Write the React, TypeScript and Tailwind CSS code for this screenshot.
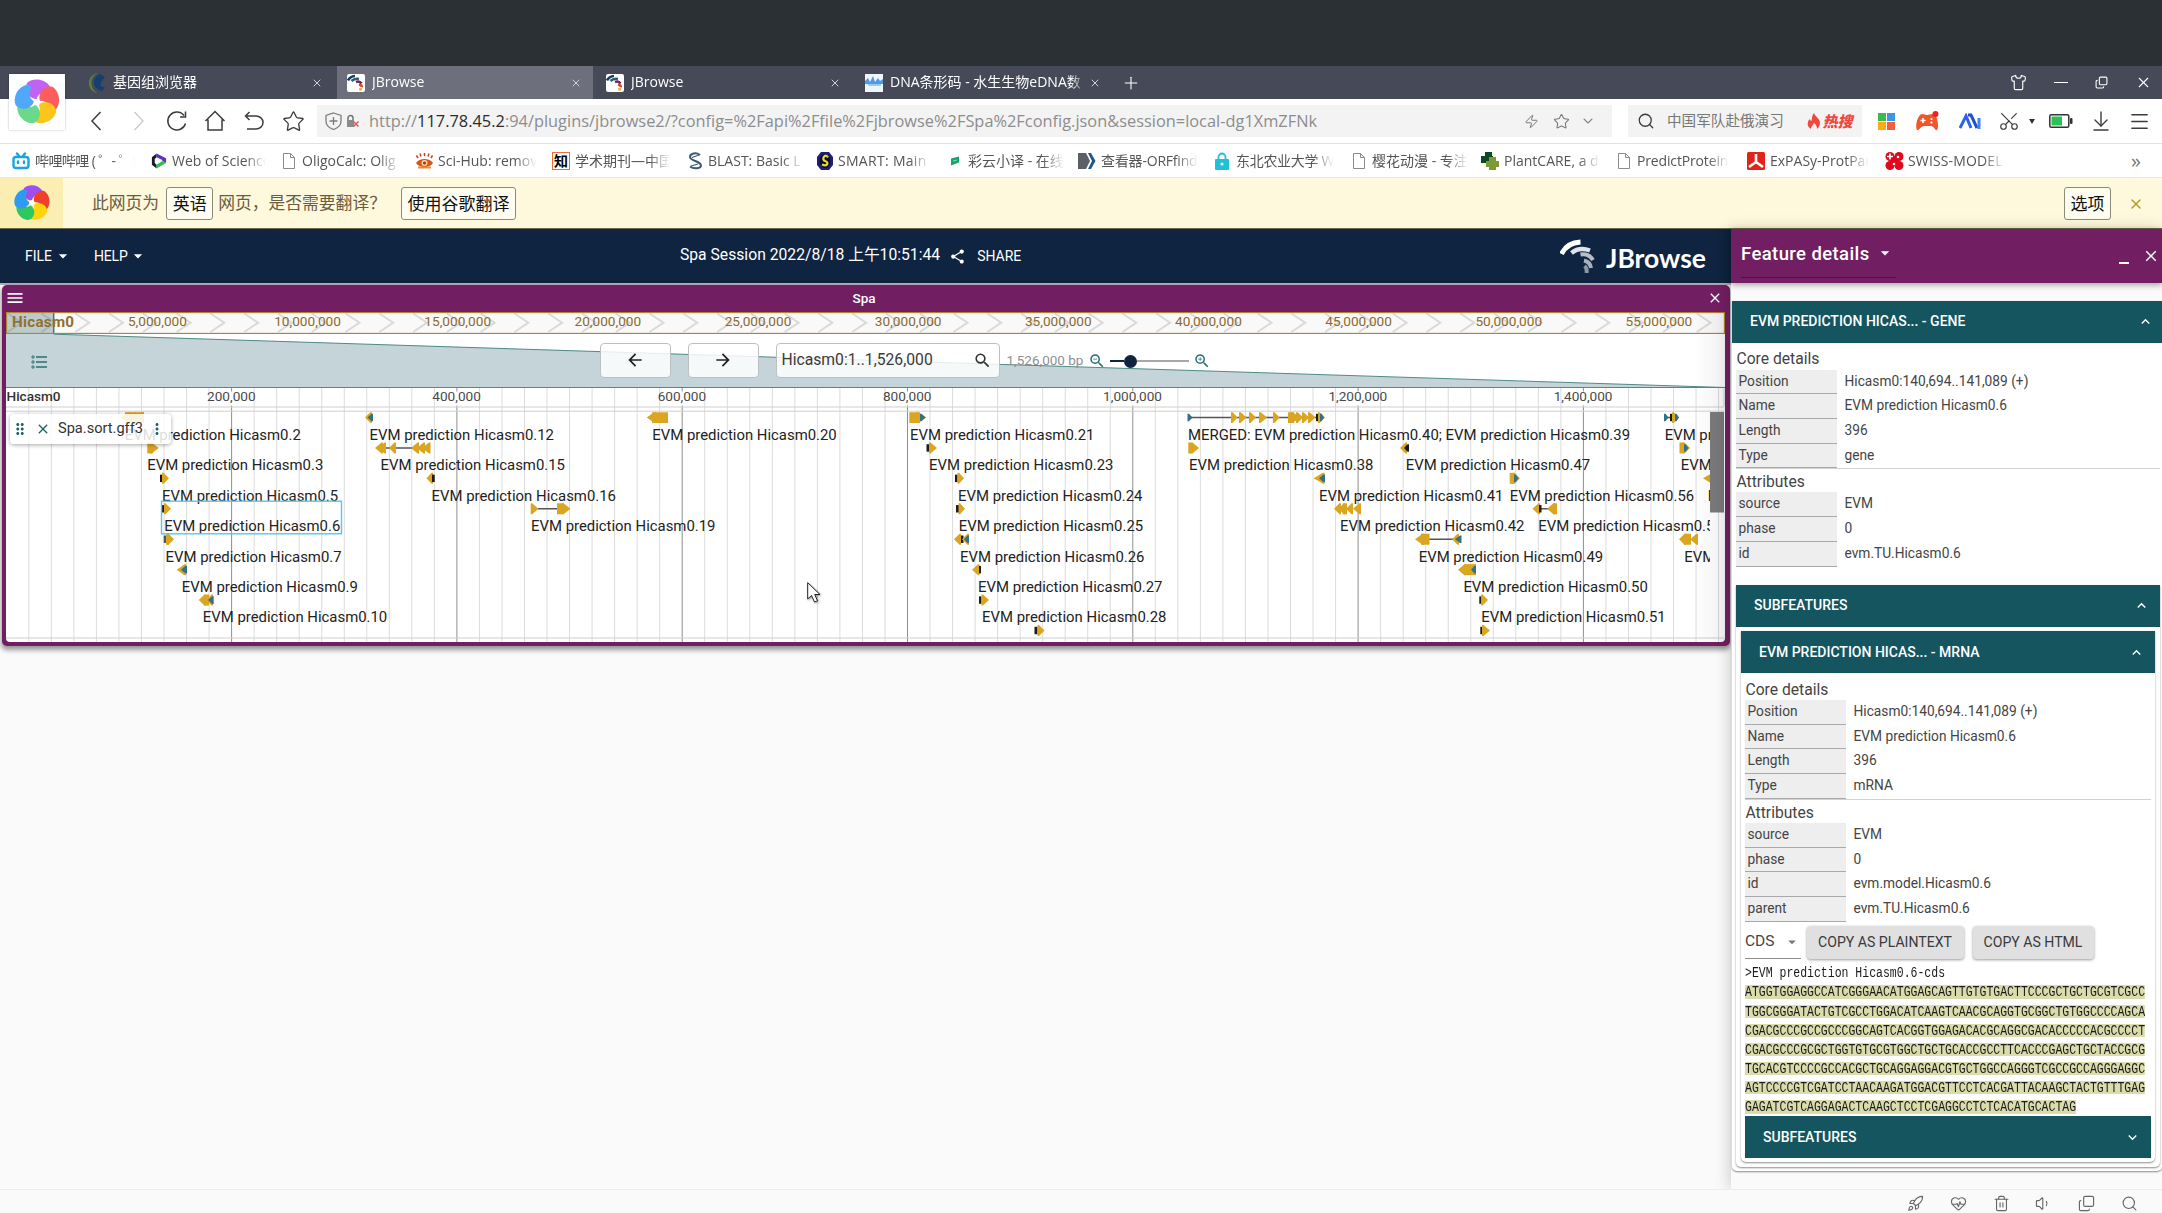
import React from 'react';
import {
  HeartPulse, Trash2, Volume1, Search, Shirt, Zap, Star, ChevronDown, Scissors, Menu, Rocket, Plus, ArrowDownToLine, X, Copy,
} from 'lucide-react';
import {
  MdShare, MdClose, MdSearch, MdZoomIn, MdZoomOut, MdDragIndicator, MdMoreVert, MdArrowBack, MdArrowForward, MdMenu, MdExpandLess, MdExpandMore, MdArrowDropDown,
} from 'react-icons/md';

const UI = "font-['Open_Sans','Noto_Sans_CJK_SC',sans-serif]";
const APP = "font-['Roboto','Noto_Sans_CJK_SC',sans-serif]";

/* ---------- browser chrome icons ---------- */

function Pinwheel({ className, colors }: { className: string; colors: string[] }) {
  return (
    <svg viewBox="-25 -25 50 50" className={className}>
      {colors.map((c, i) => (
        <path key={i} fill={c} transform={`rotate(${i * 72 - 6})`} d="M0 -3C-9 -5 -13 -14 -8 -21C-1 -26 11 -23 15 -15C16 -12 15 -10 14 -8C11 -11 3 -11 0 -3Z" />
      ))}
      <circle r="3.500" fill="#fff" />
    </svg>
  );
}

function JBrowseFavicon() {
  return (
    <svg viewBox="0 0 18 18" className="h-[18px] w-[18px] shrink-0 rounded-[2px] bg-white">
      <g fill="none" strokeWidth="2.6">
        <path d="M1 6.5C2.5 3.5 5 2.2 8 2" stroke="#1d3b5c" />
        <path d="M4.5 7C7 4.6 9.5 4.5 12 5" stroke="#22636e" />
        <path d="M9 8C11.5 7 13.5 8 14.5 9.5" stroke="#721e63" />
        <path d="M12 10.500C14 11 15 12 14.800 13.200" stroke="#d8433c" />
        <path d="M13.500 14V16.500" stroke="#f2a527" />
      </g>
    </svg>
  );
}

const bookmarkIcons: Record<string, React.ReactNode> = {
  bili: (
    <svg viewBox="0 0 18 18" className="h-[18px] w-[18px]" fill="none" stroke="#1aa3dc" strokeWidth="2.400" strokeLinecap="round">
      <rect x="1.500" y="5" width="15" height="11" rx="2.500" />
      <path d="M5 1.500 7 4M13 1.500 11 4M6 9.500v1.500M12 9.500v1.500" />
    </svg>
  ),
  wos: (
    <svg viewBox="0 0 18 18" className="h-[18px] w-[17px]">
      <path d="M7 1 2 5v8l5 4v-4l-2-2V7l2-2z" fill="#1c1c28" />
      <path d="M7 1l10 5v5l-4-2V8L7 5z" fill="#5e33bf" />
      <path d="M7 17v-4l6-4 4 2z" fill="#2fc04f" />
    </svg>
  ),
  doc: (
    <svg viewBox="0 0 12 16" className="h-4 w-3" fill="#fff" stroke="#8b8b8b">
      <path d="M.5.5h7l4 4v11H.5zM7.500.5v4h4" />
    </svg>
  ),
  scihub: (
    <svg viewBox="0 0 19 18" className="h-[18px] w-[19px]">
      <path d="M1 11C4 5.500 15 5.500 18 11C15 16.500 4 16.500 1 11Z" fill="#d9541e" />
      <circle cx="9.500" cy="11" r="3" fill="#f7d9a0" /><circle cx="9.500" cy="11" r="1.600" fill="#c02a12" />
      <path d="M3 6 1.500 3.500M6 4.500 5 1.500M9.500 4V1M13 4.500l1-3M16 6l1.500-2.500" stroke="#d9341e" strokeWidth="1.500" />
      <path d="M3 15.500h13" stroke="#e88a2a" strokeWidth="2" />
    </svg>
  ),
  zhi: <span className="flex h-[18px] w-[18px] items-center justify-center border border-[#e8703a] bg-white text-[14px] leading-none font-bold text-black">知</span>,
  blast: (
    <svg viewBox="0 0 16 18" className="h-[18px] w-4" fill="none" stroke="#3f5878" strokeWidth="2">
      <path d="M13 3C9 0 3 1.500 3 5c0 4 11 4 11 8.500 0 3-7 4-11 1" /><path d="M5 5.500 12 3M4 14l7-2" strokeWidth="1.300" />
    </svg>
  ),
  smart: (
    <svg viewBox="0 0 18 18" className="h-[18px] w-[18px]">
      <path d="M5 0h8l4 5v8l-4 5H5l-4-5V5z" fill="#1d1f7c" />
      <ellipse cx="9" cy="9" rx="5.500" ry="7" fill="#0e0e28" />
      <path d="M12 5.500C9-.0 5 8 9 9s3 6-3 3.500" fill="none" stroke="#e8e022" strokeWidth="2.200" />
    </svg>
  ),
  caiyun: <svg viewBox="0 0 10 10" className="h-2.5 w-2.5"><path d="M1 2.500 9 .5v6L1 9.500z" fill="#15a46b" /><path d="M3 5l4-1" stroke="#7fe0b0" /></svg>,
  orf: <svg viewBox="0 0 18 16" className="h-4 w-[18px]"><path d="M0 0h8l4 8-4 8H0z" fill="#5b6066" /><path d="M10 0h3l4.500 8L13 16h-3l4-8z" fill="#205493" /></svg>,
  lock: (
    <svg viewBox="0 0 14 18" className="h-[18px] w-3.5">
      <path d="M3.500 8V5a3.500 3.500 0 0 1 7 0v3" fill="none" stroke="#20c0d8" strokeWidth="1.800" /><rect y="7" width="14" height="11" rx="1" fill="#20c0d8" /><circle cx="7" cy="12" r="1.500" fill="#fff" />
    </svg>
  ),
  plant: <svg viewBox="0 0 18 18" className="h-[18px] w-[18px]"><path d="M4 0h7v4h1v7H0V4h4z" fill="#0d4a22" /><path d="M8 5h7v4h3v6h-3v3H8v-3H5V9h3z" fill="#7d9a35" /></svg>,
  expasy: <svg viewBox="0 0 18 18" className="h-[18px] w-[18px]"><rect width="18" height="18" rx="1.500" fill="#e32219" /><path d="M9 2v8M9 10 2 15M9 10l7 5" stroke="#fff" strokeWidth="2.600" /></svg>,
  swiss: (
    <svg viewBox="0 0 19 18" className="h-[18px] w-[19px]" fill="#e0081c">
      <circle cx="5" cy="4.500" r="4.500" /><circle cx="14" cy="4.500" r="4.500" /><circle cx="5" cy="13.500" r="4.500" /><circle cx="14" cy="13.500" r="4.500" /><rect x="5" y="4" width="9" height="10" />
      <path d="M5 1.500v6M2 4.500h6" stroke="#fff" strokeWidth="1.600" /><circle cx="13" cy="5" r="1.300" fill="#fff" /><circle cx="9" cy="12" r="1.300" fill="#fff" />
    </svg>
  ),
};

const bookmarks: [string, string, string, string, string][] = [
  ['bili', '哔哩哔哩 ( ゜- ゜)', 'w-[138px]', 'w-[100px] tracking-[-.6px]', 'gap-[5px]'],
  ['wos', 'Web of Science', 'w-[133px]', 'w-[94px]', 'gap-[5px]'],
  ['doc', 'OligoCalc: Olig', 'w-[132px]', 'w-[98px]', 'gap-[7px]'],
  ['scihub', 'Sci-Hub: remov', 'w-[137px]', 'w-[99px]', 'gap-[4px]'],
  ['zhi', '学术期刊—中国', 'w-[135px]', 'w-[95px]', 'gap-[5px]'],
  ['blast', 'BLAST: Basic L', 'w-[129px]', 'w-[95px]', 'gap-[5px]'],
  ['smart', 'SMART: Main', 'w-[134px]', 'w-[92px] tracking-[.3px]', 'gap-[4px]'],
  ['caiyun', '彩云小译 - 在线', 'w-[128px]', 'w-[96px]', 'gap-[8px]'],
  ['orf', '查看器-ORFfind', 'w-[137px]', 'w-[97px] tracking-[-.2px]', 'gap-[5px]'],
  ['lock', '东北农业大学 W', 'w-[138px]', 'w-[98px] tracking-[-.3px]', 'gap-[7px]'],
  ['doc', '樱花动漫 - 专注', 'w-[128px]', 'w-[96px]', 'gap-[7px]'],
  ['plant', 'PlantCARE, a d', 'w-[137px]', 'w-[96px]', 'gap-[5px]'],
  ['doc', 'PredictProtein', 'w-[129px]', 'w-[92px] tracking-[-.15px]', 'gap-[7px]'],
  ['expasy', 'ExPASy-ProtPar', 'w-[138px]', 'w-[99px]', 'gap-[5px]'],
  ['swiss', 'SWISS-MODEL', 'w-[130px]', 'w-[97px] tracking-[.15px]', 'gap-[4px]'],
];

function Tab({ icon, label, width, active }: { icon: React.ReactNode; label: string; width: string; active?: boolean }) {
  return (
    <div className={`flex h-[33px] shrink-0 items-center pl-[10px] ${width} ${active ? 'bg-[#6d707c]' : ''}`}>
      {icon}
      <span className="-mt-[2px] ml-[7px] w-[196px] overflow-hidden text-[14px] whitespace-nowrap text-white [mask-image:linear-gradient(to_right,#000_92%,transparent)]">{label}</span>
      <X className="ml-auto h-3 w-3 shrink-0 text-[#d0d2d8]" strokeWidth={2} />
    </div>
  );
}

function TabStrip() {
  return (
    <div className="flex h-[33px] items-center bg-[#464a58] pl-[78px] text-white">
      <Tab width="w-[259px] pr-[14px]" label="基因组浏览器" icon={
        <svg viewBox="0 0 18 20" className="h-5 w-[18px] shrink-0"><path d="M10 0C2 3 1 15 9 20C-2 18-2 2 10 0Z" fill="#5b7f3a" /><path d="M12 1C3 5 4 16 14 18L17 14C12 14 10 12 17 4z" fill="#133f72" /></svg>} />
      <Tab width="w-[256px] pr-[11px]" label="JBrowse" active icon={<JBrowseFavicon />} />
      <div className="w-[3px]" />
      <Tab width="w-[256px] pr-[11px]" label="JBrowse" icon={<JBrowseFavicon />} />
      <div className="w-[3px]" />
      <Tab width="w-[257px] pr-[11px]" label="DNA条形码 - 水生生物eDNA数" icon={
        <svg viewBox="0 0 18 18" className="h-[18px] w-[18px] shrink-0"><rect width="18" height="18" fill="#eef6fd" /><path d="M0 7l3-3 2 4 3-6 2 6 3-4 2 3 3-2v5H0z" fill="#4f9be8" /><path d="M2 10h14v2H4z" fill="#9cc9f2" /></svg>} />
      <Plus className="ml-[9px] h-5 w-5" strokeWidth={1.3} />
      <div className="ml-auto flex items-center pr-2.5">
        <Shirt className="mr-[27px] h-[17px] w-[17px]" strokeWidth={1.6} />
        <div className="mr-[27px] h-px w-[14px] bg-white" />
        <Copy className="mr-[27px] h-[13px] w-[13px] -scale-x-100 rotate-180" strokeWidth={2} />
        <X className="h-[17px] w-[17px]" strokeWidth={1.5} />
      </div>
    </div>
  );
}

function AddressBar() {
  return (
    <div className="flex h-[45px] items-center border-b border-[#e2e2e2] bg-white pl-[86px] text-[#3c3c3c]">
      <svg viewBox="0 0 20 20" className="h-5 w-5" fill="none" stroke="currentColor" strokeWidth="1.500"><path d="M14.500 1 6 10l8.500 9" /></svg>
      <svg viewBox="0 0 20 20" className="ml-[23px] h-5 w-5" fill="none" stroke="#c9c9c9" strokeWidth="1.300"><path d="M5.500 1 14 10l-8.500 9" /></svg>
      <svg viewBox="0 0 20 20" className="ml-[18px] h-5 w-5 overflow-visible" fill="none" stroke="currentColor" strokeWidth="1.500"><path d="M18.500 12.500A9 9 0 1 1 17 4.500M18.500.5V6h-5.500" /></svg>
      <svg viewBox="0 0 20 20" className="ml-[18px] h-5 w-5 overflow-visible" fill="none" stroke="currentColor" strokeWidth="1.500"><path d="M.5 10 10 .5 19.500 10M3 8.500V19h14V8.500" /></svg>
      <svg viewBox="0 0 20 20" className="ml-[19px] h-5 w-5" fill="none" stroke="currentColor" strokeWidth="1.500"><path d="M1.500 5H12a7 6.500 0 0 1 0 13H3M5.500 1 1.500 5l4 4" /></svg>
      <Star className="ml-[18px] h-[23px] w-[23px]" strokeWidth={1.4} strokeLinejoin="miter" />
      <div className="ml-3 flex h-8 w-[1295px] items-center bg-[#f3f3f3] pr-4 pl-2">
        <svg viewBox="0 0 17 18" className="h-[18px] w-[17px]" fill="none" stroke="#7d7d7d" strokeWidth="1.300"><path d="M8.500 1 16 3.500V9c0 4-3 7-7.500 8.500C4 16 1 13 1 9V3.500zM8.500 5v8M4.500 9h8" /></svg>
        <svg viewBox="0 0 14 14" className="ml-1 h-3.5 w-3.5"><path d="M2 6V4a2.500 2.500 0 0 1 5 0v2" fill="none" stroke="#777" strokeWidth="1.500" /><rect x="1" y="6" width="7" height="7" fill="#8a8a8a" /><path d="m7.500 7.500 5 5m0-5-5 5" stroke="#e05050" strokeWidth="1.400" /></svg>
        <div className="ml-[9px] text-[16.35px] tracking-[.015px] whitespace-nowrap text-[#8d8d8d]">
          http://<span className="text-[#2b2b2b]">117.78.45.2</span>:94/plugins/jbrowse2/?config=%2Fapi%2Ffile%2Fjbrowse%2FSpa%2Fconfig.json&amp;session=local-dg1XmZFNk
        </div>
        <Zap className="ml-auto h-[15px] w-[15px] text-[#777]" strokeWidth={1.6} />
        <Star className="ml-[14px] h-[17px] w-[17px] text-[#777]" strokeWidth={1.5} />
        <ChevronDown className="ml-2.5 h-4 w-4 text-[#888]" strokeWidth={1.600} />
      </div>
      <div className="ml-4 flex h-8 w-[234px] items-center bg-[#f3f3f3] pl-[9px]">
        <Search className="h-[18px] w-[18px]" strokeWidth={1.700} />
        <span className="ml-3 text-[14.6px] whitespace-nowrap text-[#777]">中国军队赴俄演习</span>
        <svg viewBox="0 0 14 16" className="ml-[23px] h-4 w-3.5"><path d="M7 0c1 4 6 5 6 10 0 3-2 5-3 6 0-3-1-4-3-6-1 2-3 3-3 6C1 14 0 12 1 9c0-1 1-2 2-3 0 1 1 2 1.500 2C5 5 5 2 7 0z" fill="#f0483e" /></svg>
        <span className="ml-[3px] -skew-x-12 text-[15px] font-black text-[#f0483e]">热搜</span>
      </div>
      <div className="ml-4 grid grid-cols-2 gap-px">
        <i className="h-[8px] w-[8px] bg-[#3cba4e]" /><i className="h-[8px] w-[8px] bg-[#3b97e8]" /><i className="h-[8px] w-[8px] bg-[#fbab18]" /><i className="h-[8px] w-[8px] bg-[#f0603c]" />
      </div>
      <svg viewBox="0 0 23 20" className="ml-[21px] h-5 w-[23px]"><path d="M4 4c3-2 4 0 7 0s5-2 8 0c3 3 4 13 2 15-2 1-3-4-6-4H8c-3 0-5 5-7 4C-1 16 1 7 4 4Z" fill="#f0582c" /><path d="M7 7v5M4.500 9.500h5" stroke="#fff" strokeWidth="1.600" /><circle cx="15.500" cy="8" r="1.100" fill="#fff" /><circle cx="15.500" cy="11.500" r="1.100" fill="#fff" /><circle cx="19.500" cy="3" r="3" fill="#f02020" /></svg>
      <svg viewBox="0 0 22 16" className="ml-5 h-4 w-[22px]" fill="none" strokeWidth="3"><path d="M1 15 7 3l5 12" stroke="#2a62e8" /><path d="M9 2h3l6 13" stroke="#1f4fd0" /><path d="M20 5v11" stroke="#3b86f5" /></svg>
      <Scissors className="ml-[17px] h-[22px] w-[22px] -rotate-90" strokeWidth={1.300} />
      <i className="ml-[9px] h-0 w-0 border-x-[3px] border-t-[5px] border-x-transparent border-t-[#333]" />
      <svg viewBox="0 0 24 14" className="ml-[14px] h-3.5 w-6"><rect x=".8" y=".8" width="19" height="12.400" rx="1.500" fill="none" stroke="#333" strokeWidth="1.500" /><rect x="2.500" y="2.500" width="10.500" height="9" fill="#2bc255" /><rect x="21" y="4" width="2.500" height="6" rx="1" fill="#333" /></svg>
      <ArrowDownToLine className="ml-[16px] h-6 w-6" strokeWidth={1.400} />
      <Menu className="ml-[15px] h-[23px] w-[23px]" strokeWidth={1.500} />
    </div>
  );
}

function BookmarkBar() {
  return (
    <div className="flex h-[34px] items-center border-b border-[#e6e6e6] bg-white pl-[12px] text-[14px] text-[#555]">
      {bookmarks.map(([icon, label, w, tw, gap], i) => (
        <div key={i} className={`flex shrink-0 items-center ${w} ${gap}`}>
          <span className="shrink-0">{bookmarkIcons[icon]}</span>
          <span className={`overflow-hidden leading-[22px] whitespace-nowrap [mask-image:linear-gradient(to_right,#000_78%,transparent)] ${tw}`}>{label}</span>
        </div>
      ))}
      <span className="mr-[21px] ml-auto text-[20px] leading-none text-[#777]">»</span>
    </div>
  );
}

function TranslateBar() {
  const btn = 'flex h-[33px] items-center justify-center rounded-[3px] border border-[#8d8a78] bg-[#fffdf0] text-[17px] text-[#111]';
  return (
    <div className="flex h-[51px] items-center border-b border-[#6d6a50] bg-[#fef8dc] text-[16.800px] whitespace-nowrap text-[#6b5c40]">
      <div className="flex h-full w-[63px] items-center justify-center bg-[#fbeeb2]">
        <Pinwheel className="h-[38px] w-[38px]" colors={['#a04ef0', '#f0402c', '#fbd40c', '#2fc860', '#2f9bf0']} />
      </div>
      <span className="ml-[29px]">此网页为</span>
      <button className={`${btn} mt-px ml-[7px] w-[47px]`}>英语</button>
      <span className="ml-[5px]">网页，是否需要翻译？</span>
      <button className={`${btn} mt-px ml-[15px] w-[115px]`}>使用谷歌翻译</button>
      <button className={`${btn} mt-px ml-auto w-[47px]`}>选项</button>
      <X className="mt-px mr-[18px] ml-[17px] h-4 w-4 text-[#b39a22]" strokeWidth={2} />
    </div>
  );
}

/* ---------- genome view ---------- */

type Part = ['r' | 'l' | 'box' | 'line', number, number, string?];
const GOLD = '#daa520';
const TEAL = '#357089';
const DARK = '#1b1b1b';

const features: { row: number; label?: string; x?: number; parts: Part[] }[] = [
  { row: 0, label: 'EVM prediction Hicasm0.2', x: 124.700, parts: [['l', 120.700, 131], ['l', 126, 136], ['l', 131, 144], ['box', 125, 144]] },
  { row: 0, label: 'EVM prediction Hicasm0.12', x: 369.500, parts: [['l', 365, 372], ['l', 367.500, 373, TEAL]] },
  { row: 0, label: 'EVM prediction Hicasm0.20', x: 652.300, parts: [['l', 646.700, 656], ['box', 652, 668]] },
  { row: 0, label: 'EVM prediction Hicasm0.21', x: 910, parts: [['box', 909.300, 920], ['r', 916, 926.500], ['r', 920, 925.500, TEAL]] },
  {
    row: 0, label: 'MERGED: EVM prediction Hicasm0.40; EVM prediction Hicasm0.39', x: 1188,
    parts: [['line', 1188, 1320], ['r', 1187.500, 1192.500, TEAL], ['r', 1231, 1237.500], ['r', 1239, 1246.500], ['r', 1249, 1256], ['r', 1259, 1267], ['r', 1273, 1279.500], ['box', 1288, 1294], ['r', 1291, 1300], ['r', 1296, 1303], ['r', 1302, 1309], ['r', 1308, 1315.500], ['box', 1316, 1319, DARK], ['r', 1318, 1325], ['r', 1320, 1324, TEAL]],
  },
  { row: 0, label: 'EVM pr', x: 1664.700, parts: [['line', 1664, 1672], ['r', 1664, 1668.500, TEAL], ['box', 1670, 1673, DARK], ['r', 1672, 1679], ['r', 1675, 1679, TEAL]] },
  { row: 1, label: 'EVM prediction Hicasm0.3', x: 147.200, parts: [['box', 147.300, 153], ['r', 150, 158.700]] },
  { row: 1, label: 'EVM prediction Hicasm0.15', x: 380.500, parts: [['line', 384, 418], ['l', 375, 383], ['l', 379, 386], ['l', 389, 396], ['l', 411, 419], ['l', 417, 425], ['l', 422, 430.500]] },
  { row: 1, label: 'EVM prediction Hicasm0.23', x: 929, parts: [['box', 926.500, 929, DARK], ['r', 929, 937]] },
  { row: 1, label: 'EVM prediction Hicasm0.38', x: 1189, parts: [['box', 1188.300, 1190], ['r', 1190, 1195], ['r', 1191, 1199]] },
  { row: 1, label: 'EVM prediction Hicasm0.47', x: 1405.700, parts: [['l', 1400, 1407], ['l', 1404, 1409, DARK]] },
  { row: 1, label: 'EVM', x: 1680.700, parts: [['box', 1679.500, 1684], ['r', 1683, 1690], ['r', 1684, 1688.500, TEAL]] },
  { row: 2, label: 'EVM prediction Hicasm0.5', x: 162, parts: [['box', 160, 162.500, DARK], ['r', 162, 169]] },
  { row: 2, label: 'EVM prediction Hicasm0.16', x: 431.500, parts: [['l', 426.500, 433], ['box', 432, 434.700, DARK]] },
  { row: 2, label: 'EVM prediction Hicasm0.24', x: 958, parts: [['box', 955, 957.500, DARK], ['r', 957.500, 964]] },
  { row: 2, label: 'EVM prediction Hicasm0.41', x: 1319, parts: [['l', 1313.500, 1324.500], ['l', 1319, 1325, TEAL]] },
  { row: 2, label: 'EVM prediction Hicasm0.56', x: 1509.700, parts: [['box', 1509.700, 1514], ['r', 1513, 1520], ['r', 1514, 1518.500, TEAL]] },
  { row: 2, parts: [['l', 1703, 1714]] },
  { row: 3, label: 'EVM prediction Hicasm0.6', x: 164.200, parts: [['box', 161.500, 164, DARK], ['r', 164, 171]] },
  { row: 3, label: 'EVM prediction Hicasm0.19', x: 531, parts: [['line', 538, 558], ['r', 530.700, 538.500], ['box', 557, 564], ['r', 562, 570.500]] },
  { row: 3, label: 'EVM prediction Hicasm0.25', x: 958.700, parts: [['box', 956, 959, DARK], ['r', 958.500, 965]] },
  { row: 3, label: 'EVM prediction Hicasm0.42', x: 1340, parts: [['l', 1334, 1341], ['l', 1339, 1345], ['box', 1343, 1347], ['l', 1346, 1353], ['l', 1353, 1361]] },
  { row: 3, label: 'EVM prediction Hicasm0.5', x: 1538.300, parts: [['line', 1540, 1550], ['l', 1532.500, 1540], ['box', 1539, 1541.500, DARK], ['l', 1547, 1555], ['box', 1553, 1557]] },
  { row: 4, label: 'EVM prediction Hicasm0.7', x: 165.500, parts: [['box', 163.700, 166, '#555'], ['box', 166, 169], ['r', 167, 174]] },
  { row: 4, label: 'EVM prediction Hicasm0.26', x: 960, parts: [['l', 954, 961], ['box', 961, 963.500, DARK], ['l', 962, 969], ['l', 964, 969, TEAL]] },
  { row: 4, label: 'EVM prediction Hicasm0.49', x: 1418.700, parts: [['line', 1429, 1456], ['l', 1415, 1424], ['box', 1421, 1429.500], ['l', 1452, 1459], ['l', 1455, 1461.500, TEAL]] },
  { row: 4, label: 'EVM', x: 1684.300, parts: [['l', 1679, 1686], ['box', 1684, 1691], ['l', 1690, 1698]] },
  { row: 5, label: 'EVM prediction Hicasm0.9', x: 181.800, parts: [['l', 176.700, 186], ['l', 181, 187, TEAL]] },
  { row: 5, label: 'EVM prediction Hicasm0.27', x: 978, parts: [['l', 972, 979.500], ['box', 979, 981, DARK]] },
  { row: 5, label: 'EVM prediction Hicasm0.50', x: 1463.400, parts: [['l', 1458, 1466], ['box', 1464, 1476], ['l', 1471, 1476, TEAL]] },
  { row: 6, label: 'EVM prediction Hicasm0.10', x: 202.800, parts: [['l', 198.700, 206], ['box', 204, 209], ['l', 206, 213], ['l', 208, 213.700, TEAL]] },
  { row: 6, label: 'EVM prediction Hicasm0.28', x: 982, parts: [['box', 979, 981.500, DARK], ['r', 981.500, 989]] },
  { row: 6, label: 'EVM prediction Hicasm0.51', x: 1481.300, parts: [['box', 1479.300, 1481.500, DARK], ['r', 1481, 1488]] },
  { row: 7, parts: [['box', 1034.500, 1037.500, DARK], ['r', 1037.500, 1044.500]] },
  { row: 7, parts: [['box', 1480.300, 1483, DARK], ['r', 1482, 1490]] },
];

function Glyph({ part, y }: { part: Part; y: number }) {
  const [kind, a, b, color = GOLD] = part;
  if (kind === 'line') return <path d={`M${a} ${y}H${b}`} stroke="#555" strokeWidth="1.500" />;
  if (kind === 'box') return <rect x={a} y={y - (color === GOLD ? 5.500 : 3.700)} width={b - a} height={color === GOLD ? 11 : 7.400} fill={color} />;
  const h = color === GOLD ? 5.500 : 3.800;
  const [base, tip] = kind === 'r' ? [a, b] : [b, a];
  return <path d={`M${base} ${y - h}h${kind === 'r' ? 1.500 : -1.500}L${tip} ${y}L${base + (kind === 'r' ? 1.500 : -1.500)} ${y + h}H${base}Z`} fill={color} />;
}

const minorTicks = Array.from({ length: 76 }, (_, i) => i + 1).filter((i) => i % 10 !== 0);

function Overview() {
  return (
    <svg width="1719" height="22" viewBox="6 312 1719 22" className="block bg-[#faf9f9] font-['Roboto']">
      {Array.from({ length: 51 }, (_, i) => {
        const tip = 21.700 + i * 33.780;
        return <path key={i} d={`M${tip - 14} 313.500 ${tip} 322.700 ${tip - 14} 332`} fill="none" stroke="#dadada" strokeWidth="2" />;
      })}
      <rect x="6" y="312" width="47.700" height="22" fill="#19565f" fillOpacity=".28" stroke="#4b7478" strokeWidth="1.500" />
      {Array.from({ length: 11 }, (_, i) => (
        <text key={i} x={157.400 + i * 150.150} y="326" textAnchor="middle" fontSize="13.650" fill="#8c6a2c">{((i + 1) * 5000000).toLocaleString('en-US')}</text>
      ))}
      <text x="12" y="326.800" fontSize="15.200" fontWeight="700" fill="#93702e" textLength="62">Hicasm0</text>
      <rect x="6.500" y="312.500" width="1718" height="21" fill="none" stroke="#b5842a" strokeWidth="1.300" />
    </svg>
  );
}

function Toolbar() {
  const paper = 'flex h-[35px] items-center rounded-[4px] border border-[#bcc0c4] bg-white/85';
  return (
    <div className="relative h-[54px] bg-white">
      <svg viewBox="0 0 1719 54" className="absolute inset-0 h-[54px] w-[1719px]">
        <path d="M0 0H47.700L1719 53.500H0Z" fill="#c5d4d8" />
        <path d="M47.700 .2 1719 53.500H0" fill="none" stroke="#4f8c85" strokeWidth="1" />
      </svg>
      <div className="relative flex h-[52px] items-center">
        <svg viewBox="0 0 16 14" className="mt-[3px] ml-[25px] h-3.5 w-4" fill="none" stroke="#2b6f70">
          <path d="M5 2h11M5 7h11M5 12h11" strokeWidth="1.500" />
          <path d="M1 1h2v2H1zM1 6h2v2H1zM1 11h2v2H1z" strokeWidth=".9" />
        </svg>
        <button className={`${paper} ml-[552.500px] w-[71px] justify-center`}><MdArrowBack className="h-5 w-5 text-[#222]" /></button>
        <button className={`${paper} ml-[17px] w-[71px] justify-center`}><MdArrowForward className="h-5 w-5 text-[#222]" /></button>
        <div className={`${paper} ml-[17px] w-[224px] justify-between pr-[7px] pl-[5px]`}>
          <span className="text-[15.700px] text-[#3a3a3a]">Hicasm0:1..1,526,000</span>
          <MdSearch className="h-[19px] w-[19px] text-[#333]" />
        </div>
        <span className="ml-[7px] w-[81px] text-[13.500px] text-[#8e8e96]">1,526,000 bp</span>
        <MdZoomOut className="mt-0.5 h-[18px] w-[18px] text-[#2b7073]" />
        <div className="mt-[2px] ml-[4px] flex w-[79px] items-center">
          <i className="h-[2px] w-[14px] bg-[#0f2440]" /><i className="h-[13px] w-[13px] rounded-full bg-[#0f2440]" /><i className="h-[2px] flex-1 bg-[#a8a8a8]" />
        </div>
        <MdZoomIn className="mt-0.5 ml-1 h-[18px] w-[18px] text-[#2b7073]" />
      </div>
    </div>
  );
}

function Tracks() {
  return (
    <svg width="1719" height="254" viewBox="6 387.500 1719 254" className="block bg-white font-['Roboto']">
      {minorTicks.map((i) => <path key={i} d={`M${6.300 + i * 22.530} 387.500V642`} stroke="#dcdcdc" />)}
      {[1, 2, 3, 4, 5, 6, 7].map((i) => (
        <g key={i}>
          <path d={`M${6.300 + i * 225.300} 387.500V391M${6.300 + i * 225.300} 405V642`} stroke="#8f8f8f" />
          <text x={6 + i * 225.300} y="400.800" textAnchor="middle" fontSize="13.600" fill="#4a4a4a">{(i * 200000).toLocaleString('en-US')}</text>
        </g>
      ))}
      <text x="6.500" y="400.300" fontSize="13.600" fontWeight="500" fill="#333">Hicasm0</text>
      <path d="M6 406.500H1724M6 410.700H1724M6 637.500H1724M1724 388V406" stroke="#cfcfcf" fill="none" />
      <clipPath id="track-area"><rect x="6" y="411.700" width="1704" height="229" /></clipPath>
      <g clipPath="url(#track-area)">
        {features.map((f, i) => {
          const y = 417 + f.row * 30.430;
          return (
            <g key={i}>
              {f.parts.map((p, j) => <Glyph key={j} part={p} y={y} />)}
              {f.label && <text x={f.x} y={y + 22.300} fontSize="14.900" fill="#222">{f.label}</text>}
            </g>
          );
        })}
        <text x="1707.700" y="500.200" fontSize="14.900" fill="#222">E</text>
        <rect x="161.500" y="500.700" width="180" height="32.600" fill="none" stroke="#5cc4ea" strokeWidth="1.400" />
      </g>
      <rect x="1710" y="411.500" width="14" height="100.500" fill="#7c7c7c" />
    </svg>
  );
}

function GenomeWindow() {
  return (
    <div className="relative ml-[2px] w-[1728px] rounded-[5px] bg-[#721e62] pb-1 shadow-[0_3px_5px_1px_rgba(0,0,0,.4)]">
      <div className="flex h-[27px] items-center justify-between pr-[7px] pb-px pl-[3px] text-white">
        <MdMenu className="h-5 w-5" />
        <span className="mr-1 text-[13.500px] font-medium">Spa</span>
        <MdClose className="h-4 w-4" />
      </div>
      <div className="relative ml-1 w-[1719px] overflow-hidden rounded-b-[4px]">
        <Overview />
        <Toolbar />
        <Tracks />
        <div className="absolute top-[102px] left-[4px] flex h-[30px] w-[161px] items-center rounded-[4px] bg-white/85 pl-px text-[#1f6568] shadow-[0_1px_4px_rgba(0,0,0,.35)]">
          <MdDragIndicator className="h-[18px] w-[18px]" />
          <MdClose className="ml-[6px] h-4 w-4" />
          <span className="ml-[7px] text-[14.600px] text-[#333]">Spa.sort.gff3</span>
          <MdMoreVert className="ml-[5px] h-[18px] w-[18px]" />
        </div>
        <svg viewBox="0 0 14 22" className="absolute top-[270px] left-[801px] h-[22px] w-[14px] overflow-visible drop-shadow-[1px_1px_1px_rgba(0,0,0,.4)]">
          <path d="M.7 .7V17l3.800-3.500L7.500 20l3-1.300L7.700 12.500H13z" fill="#fff" stroke="#222" />
        </svg>
        <div className="absolute inset-y-0 right-0 w-8 bg-gradient-to-r from-transparent to-black/5" />
      </div>
    </div>
  );
}

function AppBar() {
  return (
    <div className="flex h-[54px] items-center bg-[#0f2440] text-white">
      <div className="flex w-[680px] items-center pl-[25px] text-[14px]">
        <span>FILE</span><MdArrowDropDown className="ml-px h-5 w-5" />
        <span className="ml-[21px] tracking-[-.2px]">HELP</span><MdArrowDropDown className="h-5 w-5" />
      </div>
      <div className="-mt-[3px] text-[15.700px] whitespace-nowrap">Spa Session 2022/8/18 上午10:51:44</div>
      <MdShare className="ml-[9px] h-[17px] w-[17px]" />
      <span className="ml-[11px] text-[14px]">SHARE</span>
      <svg viewBox="0 0 35 34" className="mr-[11px] ml-auto h-[34px] w-[35px]" fill="none">
        <path d="M1.500 15C5 7.500 11 3.500 20.500 3" stroke="#fff" strokeWidth="5" />
        <path d="M11.500 14C17 9.500 23 9 30 11.500" stroke="#dfe2e8" strokeWidth="4.500" />
        <path d="M20.500 15.500C26 14.500 30.500 17 33 21" stroke="#b9bfca" strokeWidth="4" />
        <path d="M24 21.500C28.500 22.500 30.500 25.500 31 29" stroke="#aab0bd" strokeWidth="4" />
        <path d="M24.500 27C26.500 28.500 27 31 26.500 34" stroke="#8e96a8" strokeWidth="4" />
      </svg>
      <span className="mt-1.5 mr-[25px] font-['Lato'] text-[26.500px] font-bold">JBrowse</span>
    </div>
  );
}

/* ---------- feature drawer ---------- */

function BarHeader({ title, open = true, pr }: { title: string; open?: boolean; pr: string }) {
  return (
    <div className={`flex h-[41.700px] items-center justify-between bg-[#14555f] pl-[18px] text-[14px] font-medium text-white ${pr}`}>
      <span>{title}</span>
      {open ? <MdExpandLess className="h-[17px] w-[17px]" /> : <MdExpandMore className="h-[17px] w-[17px]" />}
    </div>
  );
}

function Section({ title, rows, first }: { title: string; rows: [string, string][]; first?: boolean }) {
  return (
    <div>
      <div className={`flex items-center pl-[0.500px] text-[15.670px] text-[#444] ${first ? 'h-[27px] pt-[6px]' : 'h-[24px] border-t border-[#d2d2d2] pt-[2px]'}`}>{title}</div>
      {rows.map(([k, v]) => (
        <div key={k} className="flex h-[24.700px] text-[13.740px] whitespace-nowrap text-[#444]">
          <div className="flex w-[101px] items-center border-b border-[#a9a9ab] bg-[#eeeeef] pb-px pl-[2.500px]">{k}</div>
          <div className="flex items-center pb-[2px] pl-[7.500px]">{v}</div>
        </div>
      ))}
    </div>
  );
}

const sequence = [
  'ATGGTGGAGGCCATCGGGAACATGGAGCAGTTGTGTGACTTCCCGCTGCTGCGTCGCC',
  'TGGCGGGATACTGTCGCCTGGACATCAAGTCAACGCAGGTGCGGCTGTGGCCCCAGCA',
  'CGACGCCCGCCGCCCGGCAGTCACGGTGGAGACACGCAGGCGACACCCCCACGCCCCT',
  'CGACGCCCGCGCTGGTGTGCGTGGCTGCTGCACCGCCTTCACCCGAGCTGCTACCGCG',
  'TGCACGTCCCCGCCACGCTGCAGGAGGACGTGCTGGCCAGGGTCGCCGCCAGGGAGGC',
  'AGTCCCCGTCGATCCTAACAAGATGGACGTTCCTCACGATTACAAGCTACTGTTTGAG',
  'GAGATCGTCAGGAGACTCAAGCTCCTCGAGGCCTCTCACATGCACTAG',
];

const core = (type: string): [string, string][] => [
  ['Position', 'Hicasm0:140,694..141,089 (+)'],
  ['Name', 'EVM prediction Hicasm0.6'],
  ['Length', '396'],
  ['Type', type],
];

const card = 'rounded-b-[5px] bg-white shadow-[0_1px_2px_rgba(0,0,0,.45)]';
const grayBtn = 'flex h-[33px] items-center justify-center rounded-[4px] bg-[#e0e0e0] text-[14.100px] text-[#3a3a3a] shadow-[0_1px_3px_rgba(0,0,0,.4)]';

function Drawer() {
  return (
    <aside className="relative z-10 flex w-[431px] shrink-0 flex-col bg-[#fafafa] shadow-[-2px_0_14px_rgba(0,0,0,.18)]">
      <div className="flex h-[54px] shrink-0 bg-[#721e62] pl-[10px] text-white shadow-[0_2px_6px_rgba(0,0,0,.35)]">
        <div className="flex h-[49px] w-[155px] items-center justify-between border-b border-[#4c1242] pt-[3px] pr-px">
          <span className="text-[18.500px] font-medium tracking-[.4px]">Feature details</span>
          <MdArrowDropDown className="mb-[3px] h-5 w-5" />
        </div>
        <div className="mt-[33px] ml-auto h-[1.500px] w-[10px] bg-white" />
        <MdClose className="mt-[18px] mr-[2px] ml-[13px] h-[18px] w-[18px]" />
      </div>
      <div className={`mt-[18px] ml-px ${card} pb-[4.500px]`}>
        <BarHeader title="EVM PREDICTION HICAS... - GENE" pr="pr-[8px]" />
        <div className="ml-[4px] w-[424px]">
          <Section first title="Core details" rows={core('gene')} />
          <Section title="Attributes" rows={[['source', 'EVM'], ['phase', '0'], ['id', 'evm.TU.Hicasm0.6']]} />
          <div className={`mt-[18.500px] ${card} pb-[4.500px]`}>
            <BarHeader title="SUBFEATURES" pr="pr-[10px]" />
            <div className={`mt-[4.700px] ml-[5px] w-[414px] ${card} pb-1`}>
              <BarHeader title="EVM PREDICTION HICAS... - MRNA" pr="pr-[10px]" />
              <div className="ml-1 w-[406px]">
                <Section first title="Core details" rows={core('mRNA')} />
                <Section title="Attributes" rows={[['source', 'EVM'], ['phase', '0'], ['id', 'evm.model.Hicasm0.6'], ['parent', 'evm.TU.Hicasm0.6']]} />
                <div className="flex h-[42px] items-center">
                  <div className="flex h-8 w-[56px] items-center justify-between border-b border-[#8d8d8d] text-[15.500px] text-[#444]">
                    CDS<MdArrowDropDown className="h-[18px] w-[18px] text-[#777]" />
                  </div>
                  <div className={`${grayBtn} ml-[5.500px] w-[157px]`}>COPY AS PLAINTEXT</div>
                  <div className={`${grayBtn} ml-[9px] w-[121px]`}>COPY AS HTML</div>
                </div>
                <div className="w-max origin-left scale-x-[.8210] font-['Liberation_Mono',monospace] text-[14px] whitespace-pre text-[#1a1a1a]">
                  <div className="flex h-[19.100px] items-center">{'>EVM prediction Hicasm0.6-cds'}</div>
                  {sequence.map((s) => (
                    <div key={s} className="flex h-[19.100px] items-center">
                      <span className="h-[13.500px] bg-[#dadcac] leading-[14px]">{s}</span>
                    </div>
                  ))}
                </div>
                <BarHeader title="SUBFEATURES" open={false} pr="pr-[10px]" />
              </div>
            </div>
          </div>
        </div>
      </div>
    </aside>
  );
}

function StatusBar() {
  const c = 'h-[17px] w-[17px]';
  return (
    <div className="relative z-20 flex h-[24.500px] items-center justify-end gap-[25.800px] border-t border-[#ededed] bg-[#fafafb] pt-1 pr-[24px] text-[#666]">
      <Rocket className={c} strokeWidth={1.600} />
      <HeartPulse className={c} strokeWidth={1.600} />
      <Trash2 className={c} strokeWidth={1.600} />
      <Volume1 className={c} strokeWidth={1.600} />
      <Copy className={`${c} -scale-y-100`} strokeWidth={1.600} />
      <Search className={c} strokeWidth={1.600} />
    </div>
  );
}

export default function App() {
  return (
    <div className="flex h-[1213px] w-[2162px] flex-col overflow-hidden bg-[#fafafa]">
      <div className="h-[66px] shrink-0 bg-[#2b3034]" />
      <header className={`relative shrink-0 ${UI}`}>
        <TabStrip />
        <AddressBar />
        <BookmarkBar />
        <TranslateBar />
        <div className="absolute top-[8px] left-[9px] flex h-[56px] w-[56px] items-center justify-center bg-white shadow-[0_0_2px_rgba(0,0,0,.3)]">
          <Pinwheel className="h-[48px] w-[48px]" colors={['#c063f5', '#fb5e5c', '#fcc51a', '#6cd88a', '#4fa9f8']} />
        </div>
      </header>
      <main className={`flex min-h-0 flex-1 ${APP}`}>
        <div className="flex w-[1731px] flex-col">
          <AppBar />
          <div className="h-[2px] bg-[#b9adbb]" />
          <GenomeWindow />
        </div>
        <Drawer />
      </main>
      <StatusBar />
    </div>
  );
}
